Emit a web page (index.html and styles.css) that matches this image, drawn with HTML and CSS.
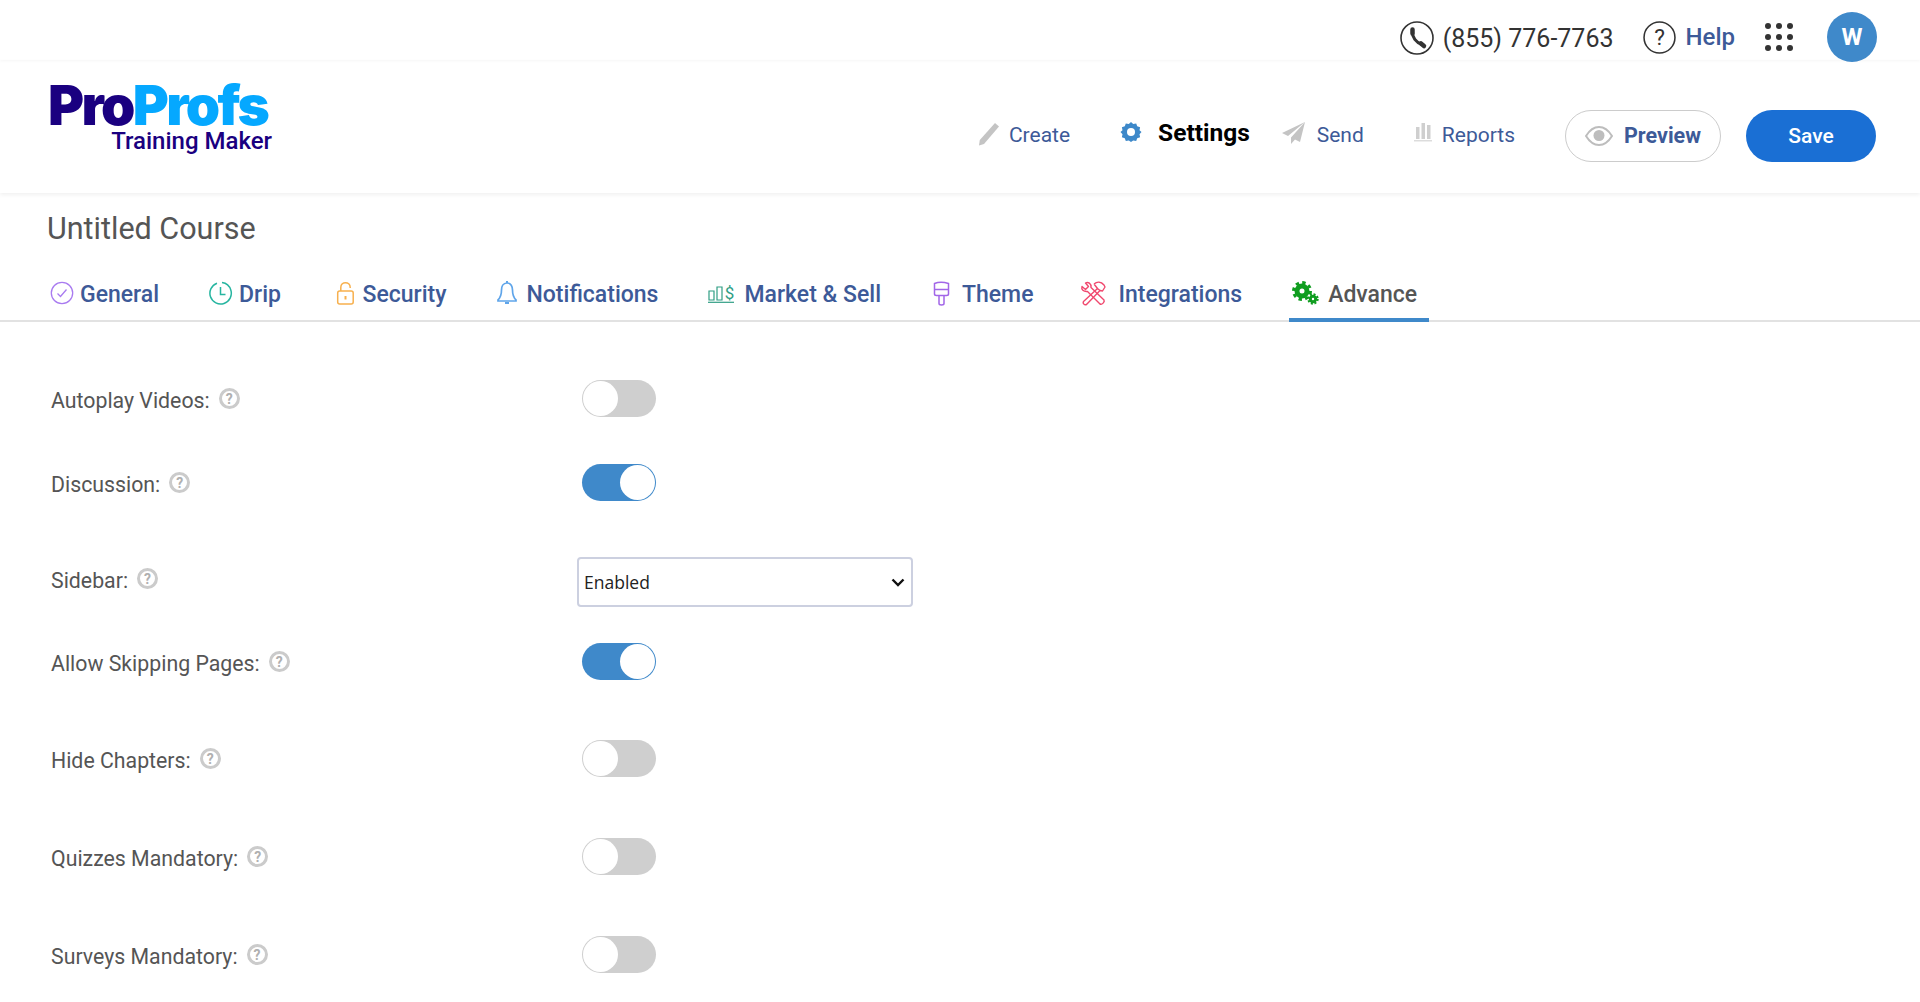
FILE: index.html
```html
<!DOCTYPE html>
<html>
<head>
    <meta charset="utf-8">
    <title>Untitled Course</title>
    <link rel="stylesheet" href="styles.css">
</head>
<body>
    <div class="topbar">
        <svg class="ic-phone" viewBox="0 0 34 34"><circle cx="17" cy="17" r="16" fill="none" stroke="#333" stroke-width="1.6"/><path d="M12.500 10.500c-.5 5.500 3.500 11 9.500 13" fill="none" stroke="#333" stroke-width="3"/><path d="M12.500 8.500v4M21 22.500l3 2.500" fill="none" stroke="#333" stroke-width="4.500" stroke-linecap="round"/></svg>
        <span class="phone">(855) 776-7763</span>
        <svg class="ic-help" viewBox="0 0 32 32"><circle cx="16" cy="16" r="15" fill="none" stroke="#333" stroke-width="1.5"/><text x="16" y="23.500" text-anchor="middle" class="help-mark">?</text></svg>
        <a class="help">Help</a>
        <div class="dots"><i></i><i></i><i></i><i></i><i></i><i></i><i></i><i></i><i></i></div>
        <div class="avatar">W</div>
    </div>

    <div class="header">
        <div class="logo">
            <div class="logo-main"><span class="pro">Pro</span><span class="profs">Profs</span></div>
            <div class="logo-sub">Training Maker</div>
        </div>
        <div class="nav">
            <a class="nav-item nav-create">
                <svg width="22" height="24" viewBox="0 0 22 24"><path d="M17 1l4 3.500L6 22l-5 1.500.8-5.500z" fill="#c4c4c4"/></svg>
                Create
            </a>
            <a class="nav-item nav-settings">
                <svg width="22" height="22" viewBox="0 0 22 22"><path d="M11 1l2.200 2 3-.6 1 2.900 2.900 1-.6 3 2 1.700-2 2.200.6 3-2.900 1-1 2.800-3-.6L11 21l-2.200-1.600-3 .6-1-2.800-2.900-1 .6-3L.5 11l2-1.700-.6-3 2.900-1 1-2.900 3 .6z" fill="#3d88c9"/><circle cx="11" cy="11" r="4" fill="#fff"/></svg>
                Settings
            </a>
            <a class="nav-item nav-send">
                <svg width="24" height="22" viewBox="0 0 24 22"><path d="M23 0L0 11l6 3L23 0 9 15.500V22l4-4.500 5 2.500z" fill="#c4c4c4"/></svg>
                Send
            </a>
            <a class="nav-item nav-reports">
                <svg width="20" height="20" viewBox="0 0 20 20"><path d="M3 5h3.500v12H3zM8.500 1H12v16H8.500zM14 3h3.500v14H14z" fill="#cfcfcf"/><path d="M1 18h18v1.500H1z" fill="#dcdcdc"/></svg>
                Reports
            </a>
        </div>
        <a class="btn-preview">
            <svg width="28" height="20" viewBox="0 0 28 20"><path d="M1 10C5 3.500 9.500 1 14 1s9 2.500 13 9c-4 6.500-8.500 9-13 9s-9-2.500-13-9z" fill="none" stroke="#bdbdbd" stroke-width="2"/><circle cx="14" cy="9.500" r="5.500" fill="#bdbdbd"/></svg>
            Preview
        </a>
        <a class="btn-save">Save</a>
    </div>

    <h1 class="course-title">Untitled Course</h1>

    <div class="tabs">
        <a class="tab tab-general">
            <svg width="24" height="24" viewBox="0 0 24 24"><circle cx="12" cy="12" r="10.700" fill="none" stroke="#a97bf0" stroke-width="1.300"/><path d="M7.500 12.500l3 3 6-7" fill="none" stroke="#a97bf0" stroke-width="1.300"/></svg>
            General
        </a>
        <a class="tab tab-drip">
            <svg width="25" height="24" viewBox="0 0 25 24"><path d="M9 2.200A10.700 10.700 0 1 0 22.800 9A10.700 10.700 0 0 0 14 1.500" fill="none" stroke="#26b5a0" stroke-width="1.500"/><path d="M12.500 6v7.500h5" fill="none" stroke="#26b5a0" stroke-width="1.500"/></svg>
            Drip
        </a>
        <a class="tab tab-security">
            <svg width="19" height="24" viewBox="0 0 19 24"><rect x="1.700" y="10" width="15.500" height="13" rx="2" fill="none" stroke="#f7b04e" stroke-width="1.500"/><path d="M4.800 10V6.500c0-6.500 9.400-6.500 9.400 0v.5" fill="none" stroke="#f7b04e" stroke-width="1.500"/><path d="M9.500 15v3.500" stroke="#f7b04e" stroke-width="2"/></svg>
            Security
        </a>
        <a class="tab tab-notify">
            <svg width="20" height="26" viewBox="0 0 20 26"><path d="M10 3c-4 0-5.500 3.500-5.500 7 0 5-1.500 8-3.500 9.800V21h18v-1.200c-2-1.800-3.500-4.800-3.500-9.800 0-3.500-1.500-7-5.500-7z" fill="none" stroke="#5fa5ea" stroke-width="1.700"/><path d="M8 23h4M10 1v2" stroke="#5fa5ea" stroke-width="2"/></svg>
            Notifications
        </a>
        <a class="tab tab-market">
            <svg width="28" height="20" viewBox="0 0 28 20"><path d="M2 8h5v9H2zM10 4h5v13h-5z" fill="none" stroke="#2f9e84" stroke-width="1.200"/><path d="M1 19.300h26" stroke="#2f9e84" stroke-width="1.200"/><text x="22.500" y="15.500" text-anchor="middle" class="dollar">$</text></svg>
            Market &amp; Sell
        </a>
        <a class="tab tab-theme">
            <svg width="19" height="26" viewBox="0 0 19 26"><path d="M2.500 3.500c4-1.500 9-1.500 14 0V14c0 1-1 1.500-2 1.500H4.500c-1 0-2-.5-2-1.500zM2.500 9.500h14M7 15.500v8c0 1 .8 1.500 2.500 1.500s2.500-.5 2.500-1.500v-8" fill="none" stroke="#a266e8" stroke-width="1.500"/></svg>
            Theme
        </a>
        <a class="tab tab-integrations">
            <svg width="26" height="26" viewBox="0 0 26 26"><path d="M2 6.500L5.500 9.500 8.500 6.500 5.500 3C8 1.500 11.500 3.500 11 7.500L24 20C25 22 22 25 20 24L7.500 11.500C3.500 12 1 9.500 2 6.500z" fill="none" stroke="#f0486e" stroke-width="1.400" stroke-linejoin="round"/><path d="M14 4C17 1.500 21 1.500 24 5L25 7 22.500 11 20 10.500 17.500 8.500 3.500 21.500C2.500 23.500 4.500 25.500 6.500 24.500L20 10.500M17.500 8.500L14 4" fill="none" stroke="#f0486e" stroke-width="1.400" stroke-linejoin="round"/></svg>
            Integrations
        </a>
        <a class="tab tab-active">
            <svg width="27" height="24" viewBox="0 0 27 24"><circle cx="10" cy="10" r="5" fill="none" stroke="#0f9d1f" stroke-width="5"/><circle cx="10" cy="10" r="8.500" fill="none" stroke="#0f9d1f" stroke-width="3" stroke-dasharray="3.400 3.270"/><circle cx="21" cy="18" r="2.700" fill="none" stroke="#0f9d1f" stroke-width="3"/><circle cx="21" cy="18" r="4.700" fill="none" stroke="#0f9d1f" stroke-width="2" stroke-dasharray="2 1.690"/></svg>
            Advance
        </a>
    </div>

    <div class="settings">
        <div class="row row-a">
            <div class="label">Autoplay Videos: <span class="hint">?</span></div>
            <div class="switch"></div>
        </div>
        <div class="row row-b">
            <div class="label">Discussion: <span class="hint">?</span></div>
            <div class="switch on"></div>
        </div>
        <div class="row row-c">
            <div class="label">Sidebar: <span class="hint">?</span></div>
            <div class="picker-wrap">
                <select class="picker"><option>Enabled</option><option>Disabled</option></select>
                <svg class="picker-arrow" width="14" height="9" viewBox="0 0 14 9"><path d="M1.500 1.500L7 7l5.500-5.500" fill="none" stroke="#111" stroke-width="2.400"/></svg>
            </div>
        </div>
        <div class="row row-d">
            <div class="label">Allow Skipping Pages: <span class="hint">?</span></div>
            <div class="switch on"></div>
        </div>
        <div class="row row-e">
            <div class="label">Hide Chapters: <span class="hint">?</span></div>
            <div class="switch"></div>
        </div>
        <div class="row row-e">
            <div class="label">Quizzes Mandatory: <span class="hint">?</span></div>
            <div class="switch"></div>
        </div>
        <div class="row">
            <div class="label">Surveys Mandatory: <span class="hint">?</span></div>
            <div class="switch"></div>
        </div>
    </div>
</body>
</html>
```

FILE: styles.css
```css
*{margin:0;padding:0;box-sizing:border-box;}
html,body{height:100%;overflow:hidden;}
body{font-family:Roboto,"Liberation Sans",sans-serif;background:#fff;color:#555;}
a{text-decoration:none;}
svg{flex:none;}

.topbar{height:60px;display:flex;align-items:center;justify-content:flex-end;padding:0 43px 0 0;position:relative;box-shadow:0 1px 3px rgba(0,0,0,.04);}
.ic-phone{width:34px;height:34px;margin:16px 9px 0 0;}
.phone{font-size:25px;color:#333;margin:16px 29px 0 0;}
.ic-help{width:33px;height:33px;margin:15px 10px 0 0;}
.help-mark{font:400 22px Roboto,sans-serif;fill:#333;}
.help{font-size:24px;font-weight:500;color:#3d5a98;margin:14px 30px 0 0;}
.dots{width:28px;display:grid;grid-template-columns:repeat(3,6px);justify-content:space-between;row-gap:5px;margin:14px 34px 0 0;}
.dots i{width:6px;height:6px;border-radius:50%;background:#333;}
.avatar{width:50px;height:50px;border-radius:50%;background:#3f89ca;color:#fff;font-size:24px;font-weight:700;display:flex;align-items:center;justify-content:center;margin-top:14px;}

.header{height:133px;display:flex;align-items:center;padding:18px 44px 0 48px;box-shadow:0 2px 4px rgba(0,0,0,.06);}
.logo{width:224px;align-self:flex-start;margin-top:5px;text-align:right;}
.logo-main{font-family:Inter,sans-serif;font-weight:900;font-size:55px;line-height:44px;height:44px;letter-spacing:-2.600px;white-space:nowrap;text-align:left;}
.pro,.profs{display:inline-block;line-height:44px;}
.pro{color:#1a0080;}
.profs{color:#05a8ff;}
.logo-sub{font-size:24px;font-weight:500;line-height:26px;margin-top:1px;color:#1a0080;}
.nav{margin:-2px 50px 0 auto;display:flex;align-items:center;}
.nav-item{display:flex;align-items:center;gap:9px;font-size:21px;color:#3d5a98;}
.nav-create svg{margin-top:-2px;}
.nav-create{margin-right:50px;}
.nav-settings{font-size:24.500px;font-weight:700;color:#000;gap:16px;margin:-5px 32px 0 0;}
.nav-send{margin-right:49px;gap:11px;}
.nav-send svg{margin-top:-4px;}
.nav-reports svg{margin-top:-6px;}
.btn-preview{width:156px;height:52px;border:1px solid #ccc;border-radius:26px;display:flex;align-items:center;justify-content:center;gap:11px;font-size:21.500px;font-weight:700;color:#3d5a98;}
.btn-save{width:130px;height:52px;margin-left:25px;border-radius:26px;background:#1a6fd4;color:#fff;font-size:21px;font-weight:500;display:flex;align-items:center;justify-content:center;}

.course-title{font-size:30.500px;font-weight:400;color:#555;line-height:36px;margin:18px 0 0 47px;}

.tabs{height:74px;margin-top:1px;display:flex;align-items:flex-end;padding-left:47px;border-bottom:2px solid #e2e2e2;}
.tab{height:50px;display:flex;align-items:center;gap:6px;padding:0 12px 6px 3px;margin-right:34px;font-size:23px;font-weight:500;color:#3d5a98;margin-bottom:-2px;}
.tab svg{margin-top:-3px;}
.tab-drip{margin-right:39.500px;}
.tab-security{gap:8px;margin-right:35px;}
.tab-notify{gap:10px;}
.tab-market{gap:9px;margin-right:36px;}
.tab-theme{gap:11px;margin-right:32px;}
.tab-integrations{gap:12px;margin-right:35px;}
.dollar{font:400 17px Roboto,sans-serif;fill:#2f9e84;}
.tab-active{color:#555;gap:9px;padding-bottom:2px;border-bottom:4px solid #3f89ca;margin-right:0;}

.settings{padding:57px 0 0 51px;}
.row{height:38px;display:flex;align-items:center;}
.row-a{margin-bottom:46px;}
.row-b{margin-bottom:62px;}
.row-c{margin-bottom:41px;}
.row-d{margin-bottom:59px;}
.row-e{margin-bottom:60px;}
.label{width:531px;font-size:21.300px;color:#555;display:flex;align-items:center;gap:9px;margin-top:5px;flex:none;}
.row-c .label{margin-top:-3px;}
.hint{width:21px;height:21px;border:3px solid #cbcbcb;border-radius:50%;color:#b0b0b0;font-size:14px;font-weight:700;display:flex;align-items:center;justify-content:center;margin-top:-4px;}
.switch{width:74px;height:37px;border-radius:19px;background:#cfcfcf;position:relative;}
.switch:after{content:"";position:absolute;left:1px;top:1px;width:35px;height:35px;border-radius:50%;background:#fff;}
.switch.on{background:#3f89ca;}
.switch.on:after{left:38px;}
.picker-wrap{position:relative;margin-left:-5px;}
.picker{display:block;width:336px;height:50px;border:2px solid #ccd0e0;border-radius:4px;background:#fff;color:#222;font-family:"Open Sans",sans-serif;font-size:17.500px;padding-left:5px;appearance:none;-webkit-appearance:none;}
.picker-arrow{position:absolute;right:8px;top:21px;pointer-events:none;}
```
